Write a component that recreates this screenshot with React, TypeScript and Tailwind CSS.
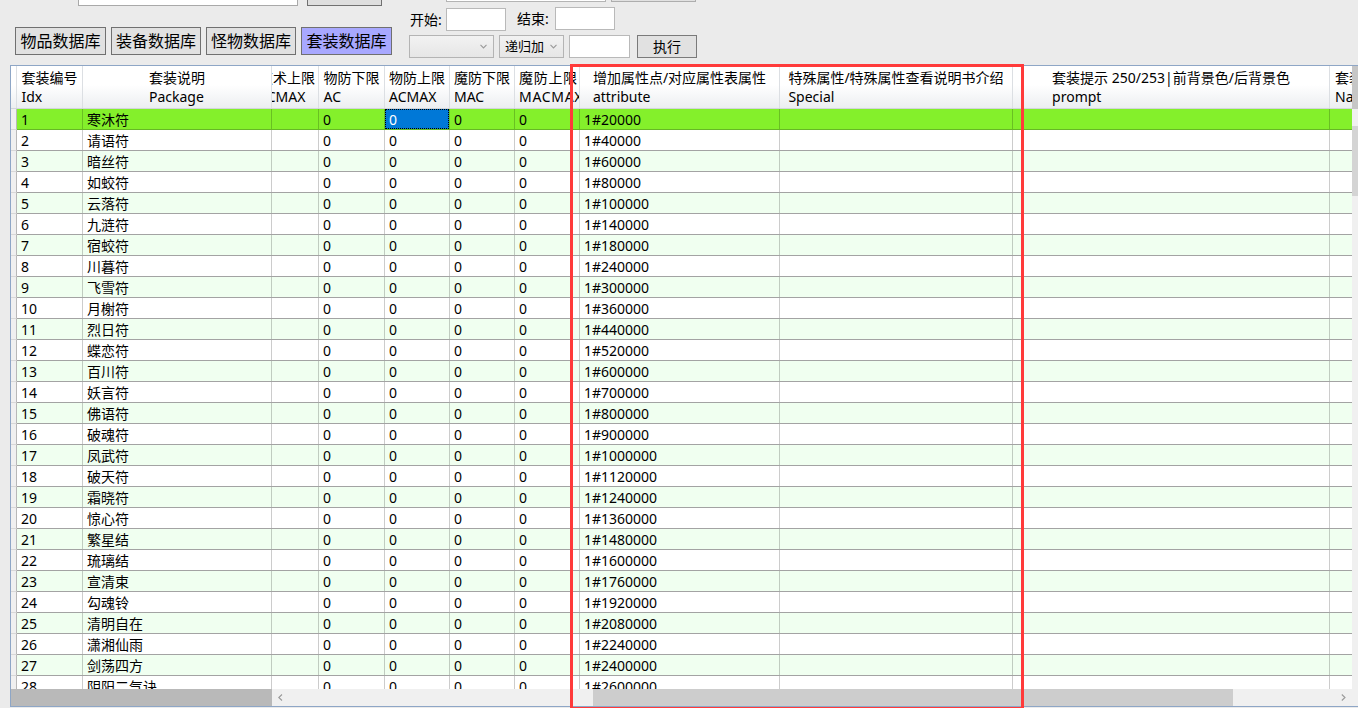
import React from 'react';

const FONT = "font-['Noto_Sans','Noto_Sans_CJK_SC',sans-serif]";

const rows: [string, string][] = [
  ['寒沐符', '1#20000'],
  ['请语符', '1#40000'],
  ['暗丝符', '1#60000'],
  ['如蛟符', '1#80000'],
  ['云落符', '1#100000'],
  ['九涟符', '1#140000'],
  ['宿蛟符', '1#180000'],
  ['川暮符', '1#240000'],
  ['飞雪符', '1#300000'],
  ['月榭符', '1#360000'],
  ['烈日符', '1#440000'],
  ['蝶恋符', '1#520000'],
  ['百川符', '1#600000'],
  ['妖言符', '1#700000'],
  ['佛语符', '1#800000'],
  ['破魂符', '1#900000'],
  ['凤武符', '1#1000000'],
  ['破天符', '1#1120000'],
  ['霜晓符', '1#1240000'],
  ['惊心符', '1#1360000'],
  ['繁星结', '1#1480000'],
  ['琉璃结', '1#1600000'],
  ['宣清束', '1#1760000'],
  ['勾魂铃', '1#1920000'],
  ['清明自在', '1#2080000'],
  ['潇湘仙雨', '1#2240000'],
  ['剑荡四方', '1#2400000'],
  ['阴阳二气诀', '1#2600000'],
];

type Col = {
  w: string;
  h1: string;
  h2: string;
  align: string;
  value: (attr: string) => string;
};

// frozen columns first, then the scrolled part
const frozen: Col[] = [
  { w: 'w-[66px]', h1: '套装编号', h2: 'Idx', align: 'justify-center', value: () => '' },
  { w: 'w-[189px]', h1: '套装说明', h2: 'Package', align: 'justify-center', value: () => '' },
];

const scrolled: Col[] = [
  { w: 'w-[47px]', h1: '道术上限', h2: 'SCMAX', align: 'justify-end pr-[3px]', value: () => '' },
  { w: 'w-[66px]', h1: '物防下限', h2: 'AC', align: 'justify-center', value: () => '0' },
  { w: 'w-[65px]', h1: '物防上限', h2: 'ACMAX', align: 'justify-center', value: () => '0' },
  { w: 'w-[65px]', h1: '魔防下限', h2: 'MAC', align: 'justify-center', value: () => '0' },
  { w: 'w-[65px]', h1: '魔防上限', h2: 'MACMAX', align: 'justify-start pl-[4px] tracking-[0.7px]', value: () => '0' },
  { w: 'w-[200px]', h1: '增加属性点/对应属性表属性', h2: 'attribute', align: 'justify-center', value: (a) => a },
  { w: 'w-[233px]', h1: '特殊属性/特殊属性查看说明书介绍', h2: 'Special', align: 'justify-center', value: () => '' },
  { w: 'w-[317px]', h1: '套装提示 250/253|前背景色/后背景色', h2: 'prompt', align: 'justify-center', value: () => '' },
  { w: 'w-[120px]', h1: '套装名称', h2: 'Name', align: 'justify-start pl-[5px]', value: () => '' },
];

function Chevron({ dir }: { dir: 'left' | 'right' | 'down' }) {
  const d = dir === 'left' ? 'M4 0.5 L0.8 3.5 L4 6.5' : dir === 'right' ? 'M0.8 0.5 L4 3.5 L0.8 6.5' : 'M0.5 0.8 L3.5 4 L6.5 0.8';
  const w = dir === 'down' ? 7 : 5;
  const h = dir === 'down' ? 5 : 7;
  return (
    <svg width={w} height={h} viewBox={`0 0 ${w} ${h}`} className="shrink-0">
      <path d={d} fill="none" stroke="#9a9a9a" strokeWidth="1.1" />
    </svg>
  );
}

function HeaderCell({ col }: { col: Col }) {
  return (
    <div className={`${col.w} flex h-full shrink-0 items-center overflow-hidden border-r border-[#dcdfe3] ${col.align}`}>
      <div className="shrink-0 whitespace-nowrap text-left text-[14px] leading-[19px] text-black">
        {col.h1}
        <br />
        {col.h2}
      </div>
    </div>
  );
}

export default function App() {
  return (
    <div className={`h-[708px] w-[1358px] overflow-hidden bg-[#ebebeb] ${FONT} text-black`}>
      {/* toolbar */}
      <div className="flex h-[65px]">
        <div className="flex w-[409px] shrink-0 flex-col">
          <div className="flex h-[6px] items-end overflow-hidden">
            <div className="ml-[78px] h-[24px] w-[220px] shrink-0 border border-[#a9a9a9] bg-white" />
            <div className="ml-[9px] h-[24px] w-[75px] shrink-0 border border-[#707070] bg-[#dedede]" />
          </div>
          <div className="ml-[15px] mt-[21px] flex gap-[5px]">
            <button className="h-[28px] w-[91px] border border-[#707070] bg-[#e1e1e1] text-[16px] leading-none">物品数据库</button>
            <button className="h-[28px] w-[90px] border border-[#707070] bg-[#e1e1e1] text-[16px] leading-none">装备数据库</button>
            <button className="h-[28px] w-[90px] border border-[#707070] bg-[#e1e1e1] text-[16px] leading-none">怪物数据库</button>
            <button className="h-[28px] w-[91px] border border-[#707070] bg-[#a8a8ff] text-[16px] leading-none">套装数据库</button>
          </div>
        </div>
        <div className="flex flex-col">
          <div className="flex h-[2px] items-end overflow-hidden">
            <div className="ml-[37px] h-[22px] w-[160px] shrink-0 border border-[#b4b4b4] bg-white" />
            <div className="ml-[5px] h-[22px] w-[85px] shrink-0 border border-[#adadad] bg-[#e1e1e1]" />
          </div>
          <div className="mt-[5px] flex h-[24px] items-start">
            <span className="mt-[3px] w-[37px] pl-[1px] text-[14px] leading-[20px]">开始:</span>
            <div className="mt-[1px] h-[23px] w-[60px] border border-[#b9b9b9] bg-white" />
            <span className="ml-[11px] mt-[2px] w-[38px] text-[14px] leading-[20px]">结束:</span>
            <div className="h-[23px] w-[60px] border border-[#b9b9b9] bg-white" />
          </div>
          <div className="mt-[4px] flex items-start">
            <div className="flex h-[23px] w-[85px] items-center justify-end border border-[#b4b4b4] bg-linear-to-b from-[#f2f2f2] to-[#e6e6e6] pr-[6px]">
              <Chevron dir="down" />
            </div>
            <div className="ml-[5px] flex h-[23px] w-[65px] items-center justify-between border border-[#b4b4b4] bg-linear-to-b from-[#f2f2f2] to-[#e6e6e6] pl-[5px] pr-[6px] text-[13px]">
              <span>递归加</span>
              <Chevron dir="down" />
            </div>
            <div className="ml-[5px] h-[23px] w-[61px] border border-[#b9b9b9] bg-white" />
            <button className="ml-[7px] h-[23px] w-[60px] border border-[#7a7a7a] bg-[#e1e1e1] text-[14px] leading-none">执行</button>
          </div>
        </div>
      </div>

      {/* grid */}
      <div className="relative ml-[10px] flex h-[642px] w-[1370px] flex-col border border-[#8ea6c6] bg-white">
        <div className="flex h-[623px]">
          <div className="flex w-[1341px] shrink-0 flex-col overflow-hidden">
            {/* header */}
            <div className="flex h-[43px] shrink-0 border-b border-[#d2d5da] bg-linear-to-b from-white from-45% to-[#eceef1]">
              <div className="w-[6px] shrink-0 border-r border-[#dcdfe3]" />
              {frozen.map((c) => (
                <HeaderCell key={c.h2} col={c} />
              ))}
              <div className="flex w-[1080px] overflow-hidden">
                {scrolled.map((c) => (
                  <HeaderCell key={c.h2} col={c} />
                ))}
              </div>
            </div>
            {/* body */}
            <div className="flex h-[580px] flex-col overflow-hidden text-[14px]">
              {rows.map(([name, attr], i) => {
                const sel = i === 0;
                const bg = sel ? 'bg-[#84f02b]' : i % 2 === 0 ? 'bg-[#f0fff0]' : 'bg-white';
                const line = sel ? 'border-b-[#66b726]' : 'border-b-[#a3a3a3]';
                return (
                  <div key={i} className="flex h-[21px] shrink-0">
                    <div className="w-[6px] shrink-0 border-b border-r border-b-[#d8d8d8] border-r-[#b8b8b8] bg-[#f0f0f0]" />
                    <div className={`flex flex-1 border-b ${line} ${bg}`}>
                      <div className="flex w-[66px] shrink-0 items-center border-r border-black/20 pl-[4px]">{i + 1}</div>
                      <div className="flex w-[189px] shrink-0 items-center whitespace-nowrap border-r border-black/20 pl-[4px]">{name}</div>
                      <div className="flex w-[1080px] overflow-hidden">
                        {scrolled.map((c, j) => (
                          <div key={j} className={`${c.w} flex shrink-0 items-center overflow-hidden whitespace-nowrap border-r border-black/20`}>
                            {sel && j === 2 ? (
                              <div className="flex h-full w-full items-center border border-dotted border-black bg-[#0078d7] pl-[3px] text-white">0</div>
                            ) : (
                              <span className="pl-[4px]">{c.value(attr)}</span>
                            )}
                          </div>
                        ))}
                      </div>
                    </div>
                  </div>
                );
              })}
            </div>
          </div>
          {/* vertical scrollbar */}
          <div className="flex w-[17px] shrink-0 flex-col bg-[#f0f0f0]">
            <div className="h-[43px] bg-[#c6c6c6]" />
            <div className="flex h-[17px] items-center justify-center">
              <div className="h-[1px] w-[5px] bg-[#9a9a9a]" />
            </div>
            <div className="h-[70px] bg-[#d4d4d4]" />
          </div>
        </div>
        {/* horizontal scrollbar */}
        <div className="flex h-[17px] shrink-0">
          <div className="w-[261px] shrink-0 bg-[#b9b9b9]" />
          <div className="flex w-[1080px] shrink-0 items-center bg-[#f0f0f0]">
            <div className="flex h-full w-[17px] items-center justify-center">
              <Chevron dir="left" />
            </div>
            <div className="ml-[304px] h-full w-[640px] bg-[#cdcdcd]" />
            <div className="ml-auto flex h-full w-[17px] items-center justify-center">
              <Chevron dir="right" />
            </div>
          </div>
          <div className="flex-1 bg-[#f0f0f0]" />
        </div>
      </div>

      {/* red annotation frame */}
      <div className="pointer-events-none absolute left-[570px] top-[64px] h-[646px] w-[454px] border-[3px] border-[#ff3a3a]" />
    </div>
  );
}
